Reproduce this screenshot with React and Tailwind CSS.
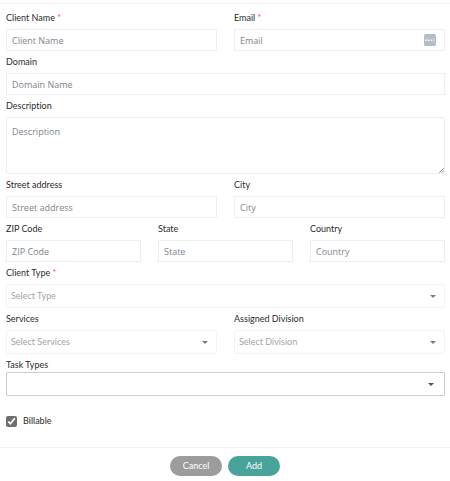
import React, { useState } from "react";

const inputClass =
  "block w-full h-[22px] border border-[#eceef0] bg-white px-[5px] text-[9px] text-gray-700 outline-none placeholder:text-[#7d858d] placeholder:opacity-100";

function Label({ htmlFor, required, children }) {
  return (
    <label
      htmlFor={htmlFor}
      className="block font-['Lato',sans-serif] text-[9px] leading-[22px] text-[#2b2b2b]"
    >
      {children}
      {required && <span className="text-[#ff5a2e]"> *</span>}
    </label>
  );
}

function TextField({ id, label, placeholder, required, type = "text", children }) {
  return (
    <div className="min-w-0">
      <Label htmlFor={id} required={required}>
        {label}
      </Label>
      <div className="relative">
        <input id={id} type={type} placeholder={placeholder} className={inputClass} />
        {children}
      </div>
    </div>
  );
}

function Caret({ className }) {
  return (
    <svg
      viewBox="0 0 6 3"
      className={`pointer-events-none absolute top-[11px] h-[3px] w-[6px] ${className}`}
      aria-hidden="true"
    >
      <path d="M0 0h6L3 3z" fill="currentColor" />
    </svg>
  );
}

function SelectField({ id, label, placeholder, required }) {
  return (
    <div className="min-w-0">
      <Label htmlFor={id} required={required}>
        {label}
      </Label>
      <div className="relative">
        <select
          id={id}
          defaultValue=""
          className="block h-6 w-full appearance-none rounded-xs border border-[#f3f3f3] bg-white px-1 font-['Lato',sans-serif] text-[9px] text-[#a3a3a3] outline-none"
        >
          <option value="">{placeholder}</option>
        </select>
        <Caret className="right-[9px] text-[#7d7d7d]" />
      </div>
    </div>
  );
}

function App() {
  const [billable, setBillable] = useState(true);

  return (
    <form
      onSubmit={(e) => e.preventDefault()}
      className="bg-white pt-[3px] font-['Open_Sans',sans-serif] [font-variant-ligatures:none]"
    >
      <div className="border-t border-[#f3f3f3] pt-[3px] pr-[5px] pl-[6px]">
        <div className="grid grid-cols-2 gap-x-[17px]">
          <TextField id="name" label="Client Name" placeholder="Client Name" required />
          <TextField id="email" label="Email" placeholder="Email" type="email" required>
            <svg
              viewBox="0 0 12 12"
              className="absolute top-[5px] right-[9px] size-3"
              aria-hidden="true"
            >
              <rect width="12" height="12" rx="1.5" fill="#b5bdc9" />
              <path d="M1.5 5.5h1.5v1.5H1.5zM4.2 5.5h1.5v1.5H4.2zM6.9 5.5h1.5v1.5H6.9z" fill="#fff" />
              <path d="M9.8 4h.7v4.5h-.7z" fill="#e3e7ec" />
            </svg>
          </TextField>
        </div>

        <TextField id="domain" label="Domain" placeholder="Domain Name" />

        <Label htmlFor="description">Description</Label>
        <div className="relative">
          <textarea
            id="description"
            placeholder="Description"
            className="block h-[57px] w-full resize-none rounded-xs border border-[#eceef0] bg-white px-[5px] py-2 text-[9px] leading-3 text-gray-700 outline-none placeholder:text-[#7d858d] placeholder:opacity-100"
          />
          <svg
            viewBox="0 0 5 5"
            className="pointer-events-none absolute right-px bottom-px size-[5px]"
            aria-hidden="true"
          >
            <path d="M.3 4.7 4.7.3M2.8 4.7l1.9-1.9" stroke="#666" strokeWidth=".8" />
          </svg>
        </div>

        <div className="grid grid-cols-2 gap-x-[17px]">
          <TextField id="street" label="Street address" placeholder="Street address" />
          <TextField id="city" label="City" placeholder="City" />
        </div>

        <div className="grid grid-cols-3 gap-x-[17px]">
          <TextField id="zip" label="ZIP Code" placeholder="ZIP Code" />
          <TextField id="state" label="State" placeholder="State" />
          <TextField id="country" label="Country" placeholder="Country" />
        </div>

        <SelectField id="type" label="Client Type" placeholder="Select Type" required />

        <div className="grid grid-cols-2 gap-x-[17px]">
          <SelectField id="services" label="Services" placeholder="Select Services" />
          <SelectField id="division" label="Assigned Division" placeholder="Select Division" />
        </div>

        <label
          htmlFor="tasks"
          className="block pt-1 font-['Lato',sans-serif] text-[9px] leading-[14px] text-[#2b2b2b]"
        >
          Task Types
        </label>
        <div className="relative">
          <select
            id="tasks"
            defaultValue=""
            className="block h-6 w-full appearance-none rounded-xs border border-[#cccccc] bg-white px-1 text-[9px] outline-none"
          >
            <option value=""></option>
          </select>
          <Caret className="right-[11px] text-[#555]" />
        </div>

        <div className="flex items-center gap-[6px] pt-[19px] pb-5">
          <input
            id="billable"
            type="checkbox"
            checked={billable}
            onChange={(e) => setBillable(e.target.checked)}
            className="size-[11px] accent-[#6f6f6f]"
          />
          <label
            htmlFor="billable"
            className="font-['Lato',sans-serif] text-[9px] leading-3 text-[#2b2b2b]"
          >
            Billable
          </label>
        </div>
      </div>

      <div className="flex justify-center gap-[6px] border-t border-[#f3f3f3] py-2 font-['Lato',sans-serif] text-[9px] text-white">
        <button type="button" className="h-5 w-[52px] rounded-full bg-[#9c9c9c]">
          Cancel
        </button>
        <button type="submit" className="h-5 w-[52px] rounded-full bg-[#48a39b]">
          Add
        </button>
      </div>
    </form>
  );
}

export default App;
